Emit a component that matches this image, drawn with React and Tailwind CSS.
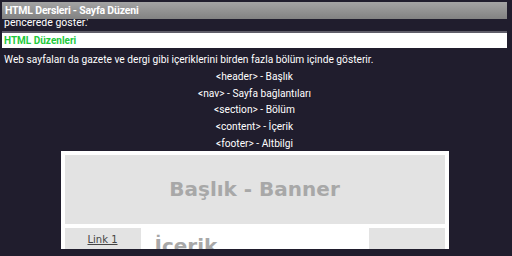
const tags = [
  "<header> - Başlık",
  "<nav> - Sayfa bağlantıları",
  "<section> - Bölüm",
  "<content> - İçerik",
  "<footer> - Altbilgi",
];

const LayoutPreview = () => {
  return (
    <div className="-mt-[2px] mx-auto w-[388px] h-[98px] overflow-hidden bg-white p-[4px] font-['DejaVu_Sans',sans-serif]">
      {/* Banner */}
      <div className="h-[69px] bg-[#e3e3e3] flex items-center justify-center">
        <span className="text-[20px] font-bold leading-[24px] text-[#a8a8a8]">Başlık - Banner</span>
      </div>

      {/* Nav + içerik + yan kolon */}
      <div className="mt-[4px] flex h-[40px]">
        <div className="w-[76px] bg-[#e3e3e3] pt-[6px] text-center text-[10px] leading-[12px]">
          <span className="text-[#444] underline">Link 1</span>
        </div>
        <div className="flex-1 bg-white pl-[14px] pt-[6px] text-[20px] leading-[24px]">
          <span className="font-bold text-[#a8a8a8]">İçerik</span>
        </div>
        <div className="w-[76px] bg-[#e3e3e3]" />
      </div>
    </div>
  );
};

const App = () => {
  return (
    <div className="w-[512px] h-[256px] overflow-hidden bg-[#201d2d] pl-[2px] pr-[5px] pt-[2px] font-['Roboto',sans-serif]">
      {/* Başlık çubuğu */}
      <div className="h-[17px] bg-gradient-to-b from-[#a4a4a4] to-[#828282] pl-[3px] text-[10.5px] font-bold leading-[17px] tracking-[-0.2px] text-white">
        HTML Dersleri - Sayfa Düzeni
      </div>

      {/* Kaydırılmış önceki satır */}
      <div className="h-[12px] overflow-hidden">
        <p className="-mt-[3px] pl-[2px] text-[10.5px] leading-[14px] text-white">pencerede göster.'</p>
      </div>

      <div className="h-[2px] bg-[#5f5d69]" />
      <div className="h-[15px] bg-white pl-[2px] text-[10px] font-bold leading-[15px] text-[#22c93c]">
        HTML Düzenleri
      </div>

      <div className="pt-[4px] text-[10.2px] leading-[16.8px] text-white">
        <p className="pl-[2px]">
          Web sayfaları da gazete ve dergi gibi içeriklerini birden fazla bölüm içinde gösterir.
        </p>
        {tags.map((t, i) => (
          <p key={i} className="text-center">{t}</p>
        ))}
      </div>

      <LayoutPreview />
    </div>
  );
};

export default App;
